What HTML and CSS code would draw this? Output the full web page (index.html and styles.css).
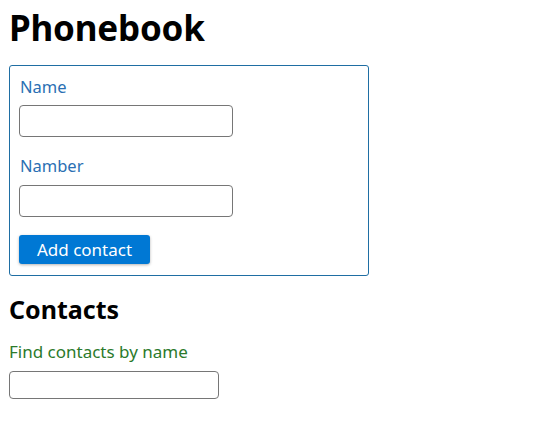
FILE: index.html
```html
<!DOCTYPE html>
<html>
<head>
<meta charset="utf-8">
<link rel="stylesheet" href="styles.css">
</head>
<body>
<h1 class="title">Phonebook</h1>
<form class="form">
  <label class="label">
    <span class="label-text">Name</span>
    <input class="input" type="text">
  </label>
  <label class="label">
    <span class="label-text">Namber</span>
    <input class="input" type="tel">
  </label>
  <button class="btn" type="button">Add contact</button>
</form>
<h2 class="subtitle">Contacts</h2>
<label class="filter">
  <span class="filter-text">Find contacts by name</span>
  <input class="filter-input" type="text">
</label>
</body>
</html>
```

FILE: styles.css
```css
body {
  margin: 0;
  padding: 0 9px;
  font-family: "Noto Sans", "Open Sans", sans-serif;
  color: #000;
  background: #fff;
}
.title {
  margin: 0;
  padding-top: 3px;
  font-size: 35px;
  line-height: 49px;
  font-weight: 700;
  letter-spacing: -0.2px;
}
.form {
  margin-top: 13px;
  width: 360px;
  box-sizing: border-box;
  border: 1px solid #1f6ea3;
  border-radius: 3px;
  padding: 10px 9px 11px 9px;
  display: flex;
  flex-direction: column;
  align-items: flex-start;
}
.label {
  display: flex;
  flex-direction: column;
  align-items: flex-start;
  margin-bottom: 18px;
}
.label-text {
  color: #2a6fb3;
  font-size: 16.5px;
  line-height: 22px;
  padding-left: 1px;
  margin-bottom: 7px;
}
.input {
  width: 214px;
  height: 32px;
  box-sizing: border-box;
  border: 1px solid #767676;
  border-radius: 4px;
  margin: 0;
}
.label + .label .label-text {
  margin-bottom: 8px;
}
.btn {
  height: 29px;
  width: 131px;
  border: none;
  border-radius: 3px;
  background: #0078d4;
  color: #fff;
  font-family: inherit;
  font-size: 17px;
  padding: 0;
  box-shadow: 0 1px 3px rgba(0,0,0,0.3);
}
.subtitle {
  margin: 17px 0 0;
  font-size: 25px;
  line-height: 32px;
  font-weight: 700;
}
.filter {
  display: flex;
  flex-direction: column;
  align-items: flex-start;
  margin-top: 16px;
}
.filter-text {
  color: #2b7a2b;
  font-size: 17px;
  line-height: 22px;
  margin-bottom: 8px;
}
.filter-input {
  width: 210px;
  height: 28px;
  box-sizing: border-box;
  border: 1px solid #767676;
  border-radius: 4px;
  margin: 0;
}
```
